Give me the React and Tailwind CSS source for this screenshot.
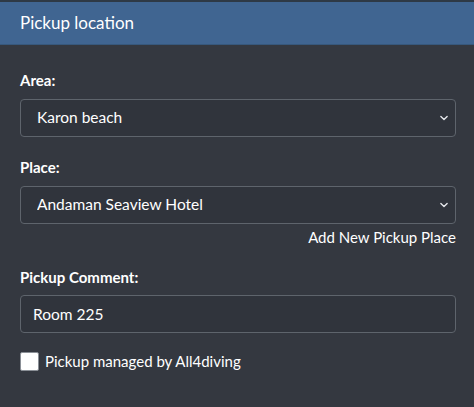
import React, { useState } from "react";

const font = { fontFamily: "Lato, 'Noto Sans', sans-serif" };

function Chevron() {
  return (
    <svg width="10" height="10" viewBox="0 0 16 16" className="pointer-events-none absolute right-[7px] top-1/2 -translate-y-1/2">
      <path d="M3 5.5l5 5 5-5" fill="none" stroke="#e5e7eb" strokeWidth="2.2" strokeLinecap="round" strokeLinejoin="round" />
    </svg>
  );
}

function SelectField({ label, value, options }) {
  const [v, setV] = useState(value);
  return (
    <div>
      <label className="block text-[15px] font-bold text-white mb-[9px] leading-5">{label}</label>
      <div className="relative">
        <select
          value={v}
          onChange={(e) => setV(e.target.value)}
          className="w-full h-[38px] appearance-none rounded border border-[#5e646c] bg-[#30343c] pl-4 pr-8 text-[15.5px] text-white outline-none"
          style={font}
        >
          {options.map((o) => (
            <option key={o}>{o}</option>
          ))}
        </select>
        <Chevron />
      </div>
    </div>
  );
}

export default function App() {
  const [comment, setComment] = useState("Room 225");
  const [managed, setManaged] = useState(false);

  return (
    <div className="w-[474px] h-[407px] bg-[#343840] border-t-2 border-[#2e3945]" style={font}>
      <div className="h-[43px] bg-[#406591] border-b border-[#37587c] flex items-center px-5">
        <h2 className="text-[17px] text-white">Pickup location</h2>
      </div>

      <div className="pl-5 pr-[18px] pt-[25px]">
        <SelectField label="Area:" value="Karon beach" options={["Karon beach", "Kata beach", "Patong beach"]} />

        <div className="mt-[20px]">
          <SelectField
            label="Place:"
            value="Andaman Seaview Hotel"
            options={["Andaman Seaview Hotel", "Karon Beach Resort"]}
          />
        </div>
        <div className="flex justify-end mt-[3px]">
          <a href="#" className="text-[15px] text-white leading-5">Add New Pickup Place</a>
        </div>

        <div className="mt-[20px]">
          <label className="block text-[15px] font-bold text-white mb-[8px] leading-5">Pickup Comment:</label>
          <input
            value={comment}
            onChange={(e) => setComment(e.target.value)}
            className="w-full h-[38px] rounded border border-[#5e646c] bg-[#30343c] px-3 text-[15.5px] text-white outline-none"
            style={font}
          />
        </div>

        <label className="mt-[17px] flex items-center gap-[6px] text-[15px] text-white">
          <input
            type="checkbox"
            checked={managed}
            onChange={(e) => setManaged(e.target.checked)}
            className="h-[19px] w-[19px] appearance-none rounded-[2px] border border-[#8a8f96] bg-white"
          />
          Pickup managed by All4diving
        </label>
      </div>
    </div>
  );
}
